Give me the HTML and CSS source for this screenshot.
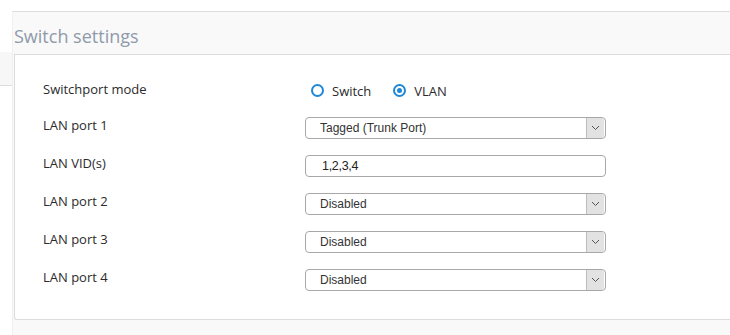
FILE: index.html
```html
<!DOCTYPE html>
<html lang="en">
<head>
    <meta charset="UTF-8">
    <title>Switch settings</title>
    <link rel="stylesheet" href="styles.css">
</head>
<body>
    <div class="page">
        <!-- Left edge of the neighbouring panel -->
        <div class="side">
            <div class="side-tab"></div>
        </div>

        <div class="main">
            <div class="section">
                <h2 class="section-title">Switch settings</h2>

                <div class="card">
                    <div class="row row-radio">
                        <div class="label">Switchport mode</div>
                        <div class="radios">
                            <label class="radio"><span class="dot"></span>Switch</label>
                            <label class="radio checked"><span class="dot"></span>VLAN</label>
                        </div>
                    </div>

                    <div class="row">
                        <div class="label">LAN port 1</div>
                        <div class="select">
                            <span class="value">Tagged (Trunk Port)</span>
                            <span class="arrow"><svg width="9" height="6" viewBox="0 0 9 6"><path d="M1 1 L4.5 4.5 L8 1" fill="none" stroke="#555" stroke-width="1"/></svg></span>
                        </div>
                    </div>

                    <div class="row">
                        <div class="label">LAN VID(s)</div>
                        <div class="input">1,2,3,4</div>
                    </div>

                    <div class="row">
                        <div class="label">LAN port 2</div>
                        <div class="select">
                            <span class="value">Disabled</span>
                            <span class="arrow"><svg width="9" height="6" viewBox="0 0 9 6"><path d="M1 1 L4.5 4.5 L8 1" fill="none" stroke="#555" stroke-width="1"/></svg></span>
                        </div>
                    </div>

                    <div class="row">
                        <div class="label">LAN port 3</div>
                        <div class="select">
                            <span class="value">Disabled</span>
                            <span class="arrow"><svg width="9" height="6" viewBox="0 0 9 6"><path d="M1 1 L4.5 4.5 L8 1" fill="none" stroke="#555" stroke-width="1"/></svg></span>
                        </div>
                    </div>

                    <div class="row">
                        <div class="label">LAN port 4</div>
                        <div class="select">
                            <span class="value">Disabled</span>
                            <span class="arrow"><svg width="9" height="6" viewBox="0 0 9 6"><path d="M1 1 L4.5 4.5 L8 1" fill="none" stroke="#555" stroke-width="1"/></svg></span>
                        </div>
                    </div>
                </div>
            </div>
        </div>
    </div>
</body>
</html>
```

FILE: styles.css
```css
body {
    margin: 0;
    font-family: "Open Sans", Arial, sans-serif;
    color: #333;
    background-color: #fff;
}
.page {
    display: flex;
    height: 335px;
    overflow: hidden;
}
.side {
    width: 12px;
    padding-top: 52px;
}
.side-tab {
    height: 33px;
    background-color: #f7f7f7;
    border-bottom: 1px solid #ddd;
}
.main {
    flex: 1;
    padding-top: 11px;
    display: flex;
    flex-direction: column;
}
.section {
    flex: 1;
    background-color: #f9f9f9;
    border-top: 1px solid #dedede;
    border-left: 1px solid #f0f0f0;
}
.section-title {
    margin: 0;
    height: 42px;
    line-height: 48px;
    padding-left: 1px;
    font-size: 18px;
    font-weight: normal;
    color: #8f9aaa;
}
.card {
    margin-left: 1px;
    height: 239px;
    padding: 25px 0 0 28px;
    background-color: #fff;
    border: 1px solid #dcdcdc;
    border-right: none;
    border-radius: 0 0 0 3px;
}
.row {
    display: grid;
    grid-template-columns: 262px 301px;
    height: 22px;
    margin-bottom: 16px;
}
.row-radio {
    height: 21px;
}
.label {
    font-size: 13px;
    line-height: 16px;
    color: #2b2b2b;
}
.row-radio .label {
    line-height: 19px;
}
.radios {
    display: flex;
    align-items: center;
    gap: 22px;
    padding-left: 6px;
    height: 21px;
}
.radio {
    display: flex;
    align-items: center;
    gap: 8px;
    font-size: 13px;
    color: #2b2b2b;
}
.dot {
    width: 9px;
    height: 9px;
    border: 2.5px solid #1f87d8;
    border-radius: 50%;
    position: relative;
}
.radio.checked .dot::after {
    content: "";
    position: absolute;
    left: 2px;
    top: 2px;
    width: 5px;
    height: 5px;
    border-radius: 50%;
    background-color: #1f87d8;
}
.select,
.input {
    box-sizing: border-box;
    height: 22px;
    border: 1px solid #a8a8a8;
    border-radius: 4px;
    background-color: #fff;
    display: flex;
    align-items: center;
    font-family: "Liberation Sans", Arial, sans-serif;
    font-size: 12px;
    color: #333;
    overflow: hidden;
}
.select .value {
    flex: 1;
    padding-left: 14px;
}
.select .arrow {
    width: 17px;
    height: 20px;
    margin-right: 1px;
    background-color: #e2e2e2;
    border-left: 1px solid #bdbdbd;
    display: flex;
    align-items: center;
    justify-content: center;
}
.input {
    padding-left: 16px;
    font-size: 12.5px;
    letter-spacing: -0.3px;
    color: #222;
}
```
